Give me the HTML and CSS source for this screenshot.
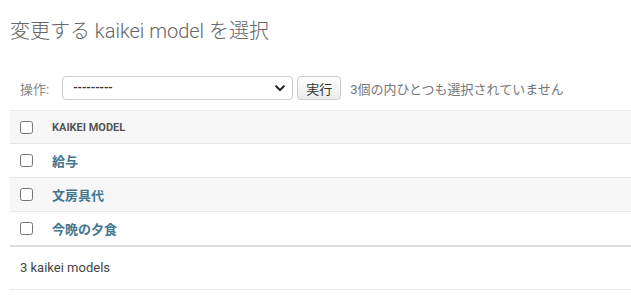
FILE: index.html
```html
<!DOCTYPE html>
<html lang="ja">
<head>
    <meta charset="UTF-8">
    <meta name="viewport" content="width=device-width, initial-scale=1.0">
    <title>変更する kaikei model を選択</title>
    <link rel="stylesheet" href="styles.css">
</head>
<body>
    <div class="content">
        <h1 class="title">変更する kaikei model を選択</h1>

        <div class="actions">
            <label class="actions-label" for="action">操作:</label>
            <div class="select-wrap">
                <select id="action" class="action-select">
                    <option value="" selected>---------</option>
                    <option value="delete_selected">選択された kaikei models の削除</option>
                </select>
                <svg class="select-arrow" width="10" height="7" viewBox="0 0 10 7">
                    <path d="M1.2 1.3 L5 5.1 L8.8 1.3" fill="none" stroke="#222" stroke-width="2" stroke-linecap="round" stroke-linejoin="round"/>
                </svg>
            </div>
            <button class="button" type="submit">実行</button>
            <span class="action-counter">3個の内ひとつも選択されていません</span>
        </div>

        <table class="result-list">
            <thead>
                <tr>
                    <th class="action-checkbox"><input type="checkbox"></th>
                    <th class="column-head">KAIKEI MODEL</th>
                </tr>
            </thead>
            <tbody>
                <tr>
                    <td class="action-checkbox"><input type="checkbox"></td>
                    <th class="field"><a href="#">給与</a></th>
                </tr>
                <tr>
                    <td class="action-checkbox"><input type="checkbox"></td>
                    <th class="field"><a href="#">文房具代</a></th>
                </tr>
                <tr>
                    <td class="action-checkbox"><input type="checkbox"></td>
                    <th class="field"><a href="#">今晩の夕食</a></th>
                </tr>
            </tbody>
        </table>

        <p class="paginator">3 kaikei models</p>
    </div>
</body>
</html>
```

FILE: styles.css
```css
body {
    margin: 0;
    padding: 0;
    background: #fff;
    color: #333;
    font-family: Roboto, "Noto Sans CJK JP", "Liberation Sans", sans-serif;
    font-size: 13px;
}

.content {
    padding: 19px 0 0 10px;
}

.title {
    margin: 0 0 23px 0;
    font-size: 20px;
    line-height: 24px;
    font-weight: 300;
    color: #666;
}

.actions {
    display: flex;
    align-items: center;
    padding: 10px;
    height: 24px;
    color: #888;
}

.actions-label {
    margin-right: 13px;
}

.select-wrap {
    position: relative;
    width: 231px;
    height: 24px;
}

.action-select {
    -webkit-appearance: none;
    appearance: none;
    box-sizing: border-box;
    width: 100%;
    height: 24px;
    padding: 0 24px 0 10px;
    border: 1px solid #ccc;
    border-radius: 4px;
    background: #fff;
    color: #333;
    font-family: inherit;
    font-size: 12px;
    font-weight: 600;
}

.select-arrow {
    position: absolute;
    right: 8px;
    top: 9px;
    pointer-events: none;
}

.button {
    box-sizing: border-box;
    height: 24px;
    width: 44px;
    margin-left: 4px;
    padding: 0;
    border: 1px solid #ccc;
    border-radius: 4px;
    background: linear-gradient(#fdfdfd, #ececec);
    color: #333;
    font-family: inherit;
    font-size: 13px;
    cursor: pointer;
}

.action-counter {
    margin-left: 9px;
    color: #777;
}

.result-list {
    width: 100%;
    border-collapse: collapse;
    border-bottom: 2px solid #ddd;
}

.result-list thead th {
    height: 32px;
    padding: 0;
    background: #f7f7f7;
    border-top: 1px solid #ebebeb;
    border-bottom: 1px solid #e6e6e6;
    text-align: left;
}

.result-list tbody td,
.result-list tbody th {
    height: 33px;
    padding: 0;
    border-bottom: 1px solid #e8e8e8;
    text-align: left;
}

.result-list tbody tr:last-child td,
.result-list tbody tr:last-child th {
    border-bottom: none;
}

.result-list tbody tr:nth-child(even) {
    background: #f7f7f7;
}

.action-checkbox {
    width: 32px;
    padding-left: 10px !important;
    vertical-align: middle;
}

.action-checkbox input {
    display: block;
    width: 13px;
    height: 13px;
    margin: 0;
}

.column-head {
    font-size: 11px;
    font-weight: 700;
    color: #555;
}

.field a {
    color: #417690;
    font-size: 13px;
    font-weight: 700;
    text-decoration: none;
}

.paginator {
    margin: 0;
    padding: 10px;
    line-height: 22px;
    font-size: 13px;
    color: #444;
    border-bottom: 1px solid #e8e8e8;
}
```
